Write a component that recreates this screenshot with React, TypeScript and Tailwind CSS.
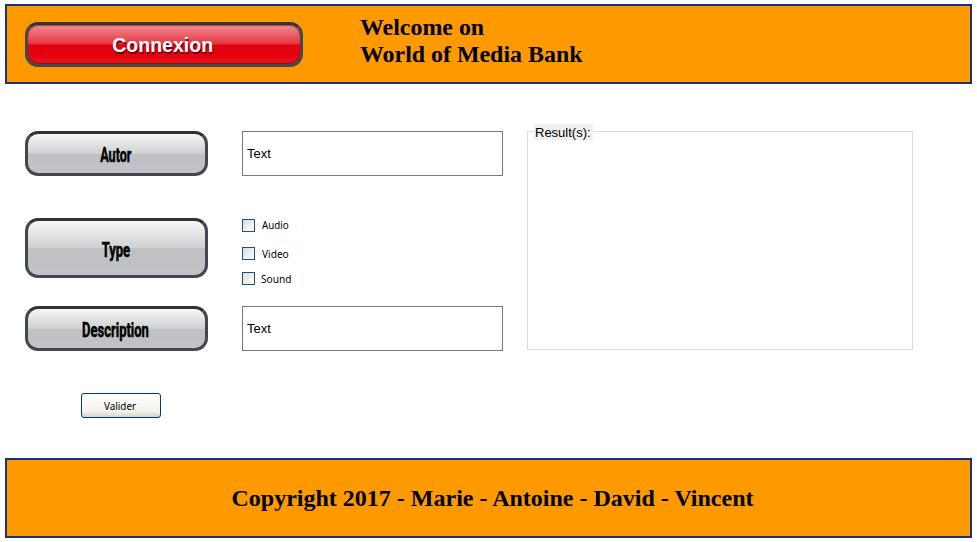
import { useState } from "react";

function PlateButton({ label, size, scale }: { label: string; size: string; scale: string }) {
  return (
    <button
      type="button"
      className={`flex w-[183px] items-center justify-center rounded-[13px] border-[3px] border-[#45464f] border-t-[#30313a] bg-[linear-gradient(to_bottom,#f7f7f7_0%,#cfd0d2_50%,#bfc0c4_51%,#c2c3c7_100%)] pt-[3px] pr-[2px] font-['Roboto',sans-serif] text-[20px] leading-5 font-bold text-black [-webkit-text-stroke:0.5px_#000] ${size}`}
    >
      <span className={`block whitespace-nowrap ${scale}`}>{label}</span>
    </button>
  );
}

function CheckRow({ label, textClass }: { label: string; textClass: string }) {
  const [checked, setChecked] = useState(false);
  return (
    <label className="flex h-[13px] items-center">
      <input
        type="checkbox"
        checked={checked}
        onChange={(e) => setChecked(e.target.checked)}
        className="size-[13px] shrink-0 appearance-none border border-[#1c5180] bg-[linear-gradient(135deg,#dcdcd7,#ffffff)] checked:bg-[#1c5180]"
      />
      <span className={`block origin-left text-[11px] leading-[13px] whitespace-nowrap ${textClass}`}>{label}</span>
    </label>
  );
}

function TextField() {
  return (
    <input
      type="text"
      defaultValue="Text"
      className="block h-[45px] w-[261px] border border-[#7a7a7a] bg-white px-1 font-['Liberation_Sans',Arial,sans-serif] text-[13px] text-black outline-none"
    />
  );
}

export default function App() {
  return (
    <div className="flex h-[542px] w-[977px] flex-col overflow-hidden bg-white pt-1 pl-[5px] text-black">
      <header className="flex h-20 w-[967px] shrink-0 items-start border-2 border-[#1b307f] bg-[#ff9900] pl-[18px]">
        <button
          type="button"
          className="mt-4 flex h-[45px] w-[278px] items-center justify-center rounded-[13px] border-[3px] border-[#48484b] border-t-[#343438] bg-[linear-gradient(to_bottom,#f08a91_0%,#e83641_49%,#e2000f_51%,#e3000f_75%,#e81717_100%)] pr-[2px] font-['Liberation_Sans',Arial,sans-serif] text-[20px] leading-6 font-bold text-white [text-shadow:1px_2px_1px_#610008] shadow-[inset_0_1px_1px_#a74249,inset_0_-1px_1px_#8b1015]"
        >
          <span className="block scale-x-[0.975]">Connexion</span>
        </button>
        <h1 className="mt-2 ml-[57px] origin-left scale-x-[0.996] font-['Liberation_Serif','Times_New_Roman',serif] text-[24px] leading-[27px] font-bold">
          Welcome on
          <br />
          World of Media Bank
        </h1>
      </header>

      <main className="flex h-[374px] shrink-0 items-start pt-[47px] pl-5">
        <div className="flex w-[217px] flex-col items-start">
          <PlateButton label="Autor" size="h-[45px]" scale="scale-x-[0.63]" />
          <PlateButton label="Type" size="mt-[42px] h-[60px]" scale="scale-x-[0.65]" />
          <PlateButton label="Description" size="mt-7 h-[45px]" scale="scale-x-[0.65]" />
          <button
            type="button"
            className="mt-[42px] ml-14 h-[25px] w-20 rounded-[3px] border border-[#003c74] bg-[linear-gradient(to_bottom,#ffffff_0%,#f4f3ee_75%,#d8d1c7_100%)] pt-px pr-[2px] font-['Noto_Sans',Tahoma,sans-serif] text-[11px] leading-4"
          >
            <span className="block scale-x-[0.9]">Valider</span>
          </button>
        </div>

        <div className="flex w-[285px] flex-col items-start font-['Noto_Sans',Tahoma,sans-serif]">
          <TextField />
          <div className="mt-[43px] flex flex-col">
            <CheckRow label="Audio" textClass="mb-[2px] ml-[7px] scale-x-[0.89]" />
            <div className="mt-[15px]">
              <CheckRow label="Video" textClass="ml-[7px] scale-x-[0.92]" />
            </div>
            <div className="mt-3">
              <CheckRow label="Sound" textClass="ml-[6px] scale-x-[0.92]" />
            </div>
          </div>
          <div className="mt-[21px]">
            <TextField />
          </div>
        </div>

        <section className="h-[219px] w-[386px] border border-[#dcdcdc] pl-[6px]">
          <h2 className="-mt-2 flex h-4 w-[59px] items-center bg-[#f0f0f0] pt-[2px] pl-[1px] font-['Liberation_Sans',Arial,sans-serif] text-[13px] leading-4 font-normal">
            Result(s):
          </h2>
        </section>
      </main>

      <footer className="flex h-20 w-[967px] shrink-0 items-center justify-center border-2 border-[#1b307f] bg-[#ff9900] pl-2 font-['Liberation_Serif','Times_New_Roman',serif] text-[24px] leading-7 font-bold">
        Copyright 2017 - Marie - Antoine - David - Vincent
      </footer>
    </div>
  );
}
